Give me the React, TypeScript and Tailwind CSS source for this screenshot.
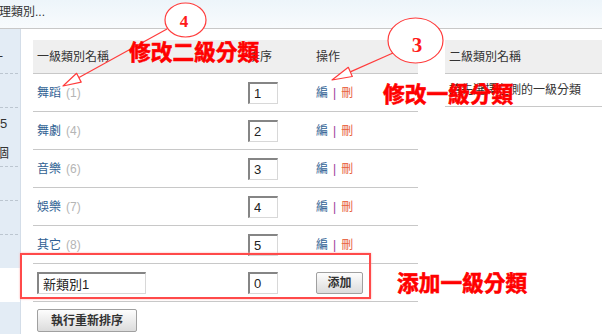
import React from "react";

const rows = [
  { name: "舞蹈", count: 1, order: 1 },
  { name: "舞劇", count: 4, order: 2 },
  { name: "音樂", count: 6, order: 3 },
  { name: "娛樂", count: 7, order: 4 },
  { name: "其它", count: 8, order: 5 },
];

function OrderInput({ value }: { value: string }) {
  return (
    <input
      readOnly
      value={value}
      className="w-[30px] h-[22px] pl-[4px] text-[13px] text-[#222] bg-white border-t-2 border-l-2 border-b border-r border-t-[#858585] border-l-[#858585] border-b-[#d8d8d8] border-r-[#d8d8d8] outline-none"
    />
  );
}

function Sidebar() {
  return (
    <div className="w-[21px] shrink-0 bg-[#e3ecf5] border-r border-[#d3dde8] overflow-hidden flex flex-col text-[13px] text-[#333]">
      <div className="h-[45px] shrink-0 border-b border-dashed border-[#bcc6d0] mr-[2px] pt-[21px] leading-[14px]">
        <span className="block -ml-[10px]">一</span>
      </div>
      <div className="h-[34px] shrink-0 border-b border-dashed border-[#bcc6d0] mr-[2px]" />
      <div className="h-[59px] shrink-0 border-b border-dashed border-[#bcc6d0] mr-[2px] flex flex-col leading-[14px]">
        <span className="block mt-[9px] ml-0">5</span>
        <span className="block mt-[15px] -ml-[4px] whitespace-nowrap">個</span>
      </div>
      <div className="h-[34px] shrink-0 border-b border-dashed border-[#bcc6d0] mr-[2px]" />
      <div className="h-[34px] shrink-0 border-b border-dashed border-[#bcc6d0] mr-[2px]" />
      <div className="h-[33px] shrink-0" />
      <div className="h-[34px] shrink-0 bg-white" />
      <div className="flex-1" />
    </div>
  );
}

export default function App() {
  return (
    <div className="relative w-[602px] h-[334px] overflow-hidden bg-white text-[12px] text-[#333] font-['Liberation_Sans','Noto_Sans_CJK_TC',sans-serif]">
      <div className="h-[29px] border-b border-[#c8c8c8] bg-gradient-to-b from-[#edf5fa] to-[#f8fbfd] leading-[24px] whitespace-nowrap">
        <span className="block -ml-[1px]">理類別...</span>
      </div>
      <div className="flex h-[305px]">
        <Sidebar />
        <div className="flex-1 pl-[12px] pt-[11px] flex">
          <div className="w-[385px] shrink-0 flex flex-col">
            <div className="flex h-[34px] items-center bg-[#efefef] border-b border-[#c8c8c8]">
              <div className="w-[211px] pl-[4px]">一級類別名稱</div>
              <div className="w-[68px] pl-[4px]">排序</div>
              <div className="flex-1 pl-[4px]">操作</div>
            </div>
            {rows.map((r) => (
              <div key={r.name} className="flex h-[38px] items-center border-b border-[#c8c8c8]">
                <div className="w-[211px] pl-[4px] flex items-center">
                  <span className="text-[#2f5f93]">{r.name}</span>
                  <span className="ml-[5px] text-[#b5b5b5]">({r.count})</span>
                </div>
                <div className="w-[68px] pl-[4px] flex items-center">
                  <OrderInput value={String(r.order)} />
                </div>
                <div className="flex-1 pl-[4px] flex items-center gap-[5px]">
                  <span className="text-[#2f5f93]">編</span>
                  <span className="text-[#9a3a9a]">|</span>
                  <span className="text-[#e8613d]">刪</span>
                </div>
              </div>
            ))}
            <div className="flex h-[38px] items-center border-b border-[#c8c8c8]">
              <div className="w-[211px] pl-[4px] flex items-center">
                <input
                  readOnly
                  value="新類別1"
                  className="w-[109px] h-[22px] pl-[4px] text-[13px] text-[#222] bg-white border-t-2 border-l-2 border-b border-r border-t-[#858585] border-l-[#858585] border-b-[#d8d8d8] border-r-[#d8d8d8] outline-none"
                />
              </div>
              <div className="w-[68px] pl-[4px] flex items-center">
                <OrderInput value="0" />
              </div>
              <div className="flex-1 pl-[4px] flex items-center">
                <button className="w-[47px] h-[22px] border border-[#a0a0a0] rounded-[2px] bg-gradient-to-b from-[#fdfdfd] to-[#dcdcdc] font-bold text-[12px] text-[#333] leading-none">
                  添加
                </button>
              </div>
            </div>
            <div className="mt-[7px] pl-[4px]">
              <button className="w-[100px] h-[23px] border border-[#a0a0a0] rounded-[2px] bg-gradient-to-b from-[#fdfdfd] to-[#dcdcdc] font-bold text-[12px] text-[#333] leading-none">
                執行重新排序
              </button>
            </div>
          </div>
          <div className="ml-[27px] flex-1 flex flex-col">
            <div className="flex h-[34px] items-center bg-[#efefef] border-b border-[#c8c8c8] pl-[4px] whitespace-nowrap">
              二級類別名稱
            </div>
            <div className="flex h-[33px] items-center border-b border-[#c8c8c8] pl-[4px] whitespace-nowrap">
              請先選擇左側的一級分類
            </div>
          </div>
        </div>
      </div>

      <div className="absolute left-[20px] top-[253px] w-[351px] h-[46px] border-2 border-[#ff4a4a] shadow-[0_0_2px_#ffb0b0] pointer-events-none" />

      <svg className="absolute left-0 top-0 pointer-events-none" width="602" height="334" viewBox="0 0 602 334">
        <ellipse cx="185.5" cy="20" rx="20.5" ry="17" fill="white" stroke="#ff3c3c" strokeWidth="1.2" />
        <text x="184" y="27" textAnchor="middle" fontSize="17" fontWeight="bold" fill="#ff1a1a" fontFamily="Liberation Serif, serif">4</text>
        <line x1="167" y1="29" x2="79" y2="77.5" stroke="#ff3c3c" strokeWidth="1.2" />
        <polygon points="63,86 81.2,82.1 76.6,73.3" fill="white" stroke="#ff3c3c" strokeWidth="1.2" strokeLinejoin="round" />

        <ellipse cx="415.5" cy="40.5" rx="27.5" ry="22.5" fill="white" stroke="#ff3c3c" strokeWidth="1.2" />
        <text x="417" y="52" textAnchor="middle" fontSize="21" fontWeight="bold" fill="#ff1a1a" fontFamily="Liberation Serif, serif">3</text>
        <line x1="393" y1="53" x2="350.3" y2="71.9" stroke="#ff3c3c" strokeWidth="1.2" />
        <polygon points="332,80 352.3,76.5 348.3,67.3" fill="white" stroke="#ff3c3c" strokeWidth="1.2" strokeLinejoin="round" />
      </svg>

      <span className="absolute left-[129px] top-[40px] text-[21.7px] leading-none font-bold text-[#ff0000] [-webkit-text-stroke:0.6px_#ff0000] whitespace-nowrap font-['Noto_Sans_CJK_TC',sans-serif]">修改二級分類</span>
      <span className="absolute left-[383px] top-[82px] text-[21.7px] leading-none font-bold text-[#ff0000] [-webkit-text-stroke:0.6px_#ff0000] whitespace-nowrap font-['Noto_Sans_CJK_TC',sans-serif]">修改一級分類</span>
      <span className="absolute left-[397px] top-[271px] text-[21.7px] leading-none font-bold text-[#ff0000] [-webkit-text-stroke:0.6px_#ff0000] whitespace-nowrap font-['Noto_Sans_CJK_TC',sans-serif]">添加一級分類</span>
    </div>
  );
}
